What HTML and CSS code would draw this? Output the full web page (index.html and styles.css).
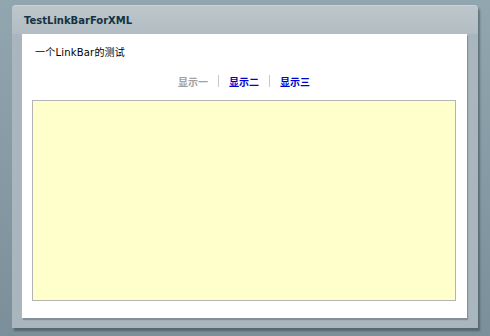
FILE: index.html
```html
<!DOCTYPE html>
<html lang="zh">
<head>
    <meta charset="UTF-8">
    <title>TestLinkBarForXML</title>
    <link rel="stylesheet" href="styles.css">
</head>
<body>
    <div class="panel">
        <div class="panel-header">TestLinkBarForXML</div>
        <div class="panel-body">
            <div class="desc">一个LinkBar的测试</div>
            <div class="link-bar">
                <span class="link disabled">显示一</span>
                <span class="sep"></span>
                <a class="link" href="#">显示二</a>
                <span class="sep"></span>
                <a class="link" href="#">显示三</a>
            </div>
            <div class="view-stack"></div>
        </div>
    </div>
</body>
</html>
```

FILE: styles.css
```css
html, body {
    height: 100%;
}
body {
    margin: 0;
    padding: 5px 12px 0 12px;
    box-sizing: border-box;
    font-family: "DejaVu Sans", "Noto Sans CJK SC", sans-serif;
    font-size: 10px;
    background: linear-gradient(#91a6af, #7a8f99);
}
.panel {
    width: 466px;
    height: 323px;
    background: #a9b6bd;
    border-radius: 4px 4px 0 0;
    box-shadow: 2px 3px 2px rgba(40, 55, 65, 0.45);
    display: flex;
    flex-direction: column;
}
.panel-header {
    height: 29px;
    line-height: 29px;
    padding-left: 12px;
    font-weight: bold;
    color: #14323f;
    background: linear-gradient(#bcc6cb, #b2bdc3);
    border-radius: 4px 4px 0 0;
    border-top: 1px solid #c9d2d6;
    box-sizing: border-box;
}
.panel-body {
    margin: 0 11px 10px 10px;
    background: #fff;
    flex: 1;
    padding: 12px 11px 0 10px;
    box-shadow: 1px 2px 1px rgba(60, 75, 85, 0.35);
}
.desc {
    padding-left: 3px;
    line-height: 14px;
    font-size: 10px;
    letter-spacing: 0.2px;
    color: #000;
}
.link-bar {
    display: flex;
    justify-content: center;
    align-items: center;
    gap: 10px;
    margin-top: 14px;
    height: 14px;
}
.link {
    font-weight: bold;
    color: #0000cc;
    text-decoration: none;
}
.link.disabled {
    color: #a0a0a0;
}
.sep {
    width: 1px;
    height: 12px;
    background: #c8c8c8;
}
.view-stack {
    margin-top: 12px;
    height: 199px;
    background: #ffffcc;
    border: 1px solid #b4b4b4;
}
```
